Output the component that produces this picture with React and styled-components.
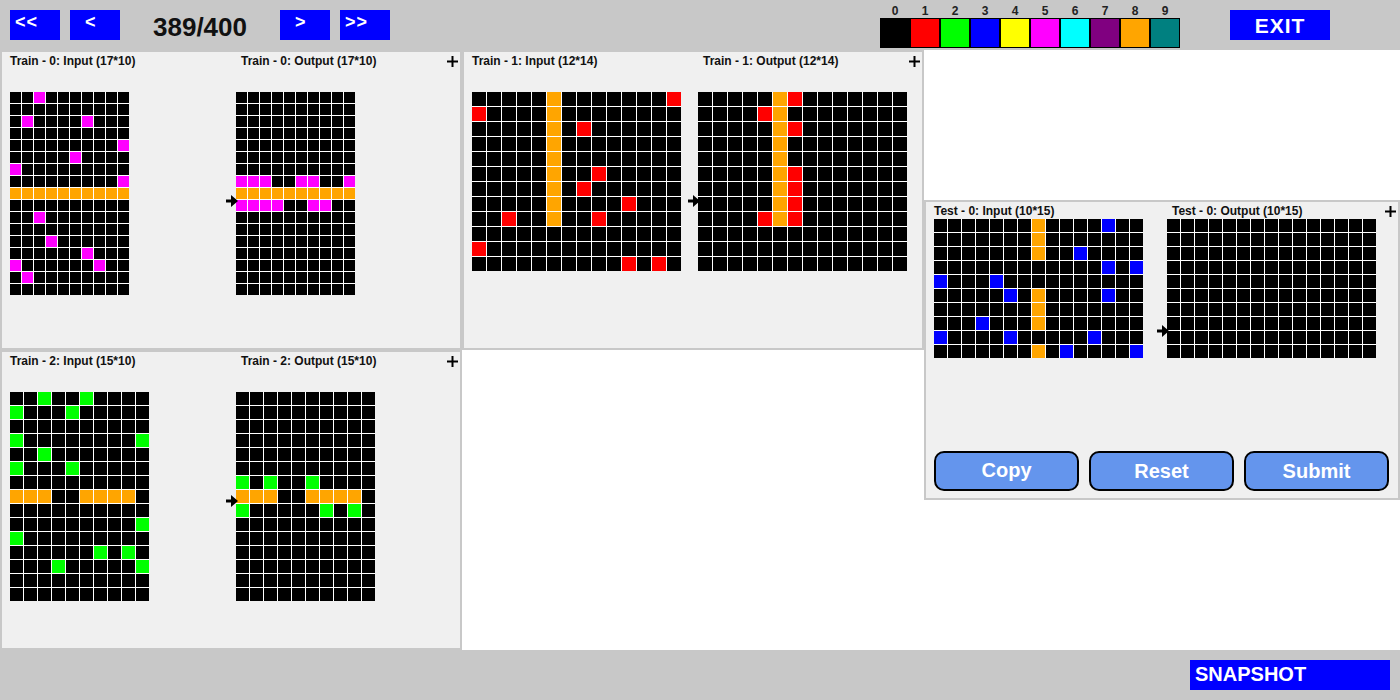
import React from 'react';
import styled, { createGlobalStyle } from 'styled-components';

const PALETTE = ['#000000', '#ff0000', '#00ff00', '#0000ff', '#ffff00', '#ff00ff', '#00ffff', '#800080', '#ffa500', '#008080'];

// builds a rows*cols board from { row: [[col, colour], ...] }
const makeBoard = (rows, cols, marks) => {
	const board = Array.from({ length: rows }, () => Array(cols).fill(0));
	Object.keys(marks).forEach(r => {
		marks[r].forEach(([c, v]) => {
			board[r][c] = v;
		});
	});
	return board;
};

const paint = (cols, v) => cols.map(c => [c, v]);
const ALL_TEN = [0, 1, 2, 3, 4, 5, 6, 7, 8, 9];

const PANELS = [
	{
		id: 'Train - 0',
		size: '17*10',
		pitch: 12,
		input: makeBoard(17, 10, {
			0: paint([2], 5),
			2: paint([1, 6], 5),
			4: paint([9], 5),
			5: paint([5], 5),
			6: paint([0], 5),
			7: paint([9], 5),
			8: paint(ALL_TEN, 8),
			10: paint([2], 5),
			12: paint([3], 5),
			13: paint([6], 5),
			14: paint([0, 7], 5),
			15: paint([1], 5)
		}),
		output: makeBoard(17, 10, {
			7: paint([0, 1, 2, 5, 6, 9], 5),
			8: paint(ALL_TEN, 8),
			9: paint([0, 1, 2, 3, 6, 7], 5)
		})
	},
	{
		id: 'Train - 1',
		size: '12*14',
		pitch: 15,
		input: makeBoard(12, 14, {
			0: [[5, 8], [13, 1]],
			1: [[0, 1], [5, 8]],
			2: [[5, 8], [7, 1]],
			3: [[5, 8]],
			4: [[5, 8]],
			5: [[5, 8], [8, 1]],
			6: [[5, 8], [7, 1]],
			7: [[5, 8], [10, 1]],
			8: [[2, 1], [5, 8], [8, 1]],
			10: [[0, 1]],
			11: [[10, 1], [12, 1]]
		}),
		output: makeBoard(12, 14, {
			0: [[5, 8], [6, 1]],
			1: [[4, 1], [5, 8]],
			2: [[5, 8], [6, 1]],
			3: [[5, 8]],
			4: [[5, 8]],
			5: [[5, 8], [6, 1]],
			6: [[5, 8], [6, 1]],
			7: [[5, 8], [6, 1]],
			8: [[4, 1], [5, 8], [6, 1]]
		})
	},
	{
		id: 'Train - 2',
		size: '15*10',
		pitch: 14,
		input: makeBoard(15, 10, {
			0: paint([2, 5], 2),
			1: paint([0, 4], 2),
			3: paint([0, 9], 2),
			4: paint([2], 2),
			5: paint([0, 4], 2),
			7: paint([0, 1, 2, 5, 6, 7, 8], 8),
			9: paint([9], 2),
			10: paint([0], 2),
			11: paint([6, 8], 2),
			12: paint([3, 9], 2)
		}),
		output: makeBoard(15, 10, {
			6: paint([0, 2, 5], 2),
			7: paint([0, 1, 2, 5, 6, 7, 8], 8),
			8: paint([0, 6, 8], 2)
		})
	}
];

const TEST_INPUT = makeBoard(10, 15, {
	0: [[7, 8], [12, 3]],
	1: [[7, 8]],
	2: [[7, 8], [10, 3]],
	3: [[12, 3], [14, 3]],
	4: [[0, 3], [4, 3]],
	5: [[5, 3], [7, 8], [12, 3]],
	6: [[7, 8]],
	7: [[3, 3], [7, 8]],
	8: [[0, 3], [5, 3], [11, 3]],
	9: [[7, 8], [9, 3], [14, 3]]
});
const TEST_OUTPUT = makeBoard(10, 15, {});

const GlobalStyle = createGlobalStyle`
	html, body {
		margin: 0;
		padding: 0;
		background: #fff;
		font-family: 'Liberation Sans', Arial, sans-serif;
	}
`;

const Page = styled.div`
	width: 1400px;
	height: 700px;
	display: flex;
	flex-direction: column;
	overflow: hidden;
`;

const TopBar = styled.header`
	height: 50px;
	flex: none;
	display: flex;
	align-items: flex-start;
	padding: 10px 70px 0 10px;
	box-sizing: border-box;
	background: #c8c8c8;
`;

// the arrows don't sit centred in the reference, inset is the text's left offset
const NavButton = styled.button`
	width: 50px;
	height: 30px;
	margin-left: ${props => props.gap || 0}px;
	padding: 0 0 6px ${props => props.inset}px;
	border: 0;
	text-align: left;
	background: #0000ff;
	color: #fff;
	font-family: inherit;
	font-weight: bold;
	font-size: 18px;
	letter-spacing: 1px;
`;

const Counter = styled.div`
	width: 160px;
	flex: none;
	text-align: center;
	font-size: 26px;
	font-weight: bold;
	line-height: 34px;
	color: #111;
`;

const Palette = styled.div`
	display: flex;
	margin: -9px 0 0 490px;
`;

const Swatch = styled.div`
	width: 30px;
	display: flex;
	flex-direction: column;
	align-items: center;
`;

const SwatchLabel = styled.span`
	height: 17px;
	font-size: 12px;
	line-height: 20px;
	font-weight: bold;
	color: #222;
`;

const SwatchColour = styled.div`
	width: 30px;
	height: 30px;
	box-sizing: border-box;
	border: 1px solid #000;
	background: ${props => props.colour};
`;

const ExitButton = styled.button`
	width: 100px;
	height: 30px;
	margin-left: 50px;
	padding: 1px 0 0;
	border: 0;
	background: #0000ff;
	color: #fff;
	font-family: inherit;
	font-weight: bold;
	font-size: 21px;
	letter-spacing: 1px;
`;

const Main = styled.main`
	flex: 1;
	display: flex;
	background: #fff;
`;

const TrainArea = styled.div`
	width: 924px;
	flex: none;
	display: grid;
	grid-template-columns: 462px 462px;
	grid-auto-rows: 300px;
`;

const TestArea = styled.div`
	flex: 1;
	display: flex;
	align-items: center;
`;

const Panel = styled.section`
	position: relative;
	box-sizing: border-box;
	width: 100%;
	height: 300px;
	display: flex;
	flex-direction: column;
	padding: 0 2px 0 8px;
	border: 2px solid #c8c8c8;
	background: #f0f0f0;
`;

const PanelHead = styled.div`
	height: ${props => props.height}px;
	flex: none;
	display: grid;
	grid-template-columns: ${props => props.split}px 1fr 11px;
	align-items: start;
`;

const Caption = styled.span`
	padding-left: ${props => props.indent || 0}px;
	font-size: 12px;
	font-weight: bold;
	line-height: 18px;
	color: #111;
	white-space: nowrap;
`;

const PlusIcon = styled.svg`
	display: block;
	width: 11px;
	height: 11px;
	margin-top: 4px;
`;

const Boards = styled.div`
	display: grid;
	grid-template-columns: ${props => props.split}px 1fr;
	align-items: start;
`;

const Board = styled.div`
	display: grid;
	width: max-content;
	grid-template-columns: repeat(${props => props.cols}, ${props => props.pitch - 1}px);
	grid-auto-rows: ${props => props.pitch - 1}px;
	gap: 1px;
	background: #fff;
`;

const Cell = styled.div`
	background: ${props => PALETTE[props.value]};
`;

const Arrow = styled.svg`
	position: absolute;
	left: ${props => props.left}px;
	top: ${props => props.top}px;
	width: 12px;
	height: 12px;
`;

const ActionRow = styled.div`
	display: flex;
	gap: 10px;
	margin-top: auto;
	margin-bottom: 7px;
`;

const ActionButton = styled.button`
	width: 145px;
	height: 40px;
	padding: 0 0 ${props => (props.raised ? 2 : 0)}px;
	box-sizing: border-box;
	border: 2px solid #000;
	border-radius: 10px;
	background: #6495ed;
	color: #fff;
	font-family: inherit;
	font-size: 20px;
	font-weight: bold;
`;

const BottomBar = styled.footer`
	height: 50px;
	flex: none;
	display: flex;
	justify-content: flex-end;
	align-items: flex-start;
	padding: 10px 10px 0 0;
	box-sizing: border-box;
	background: #c8c8c8;
`;

const SnapshotButton = styled.button`
	width: 200px;
	height: 30px;
	padding: 0 0 2px 5px;
	border: 0;
	text-align: left;
	background: #0000ff;
	color: #fff;
	font-family: inherit;
	font-size: 20px;
	font-weight: bold;
`;

const GridBoard = ({ data, pitch }) => (
	<Board cols={data[0].length} pitch={pitch}>
		{data.flat().map((value, i) => (
			<Cell key={i} value={value} />
		))}
	</Board>
);

const Plus = () => (
	<PlusIcon viewBox='0 0 11 11'>
		<path d='M4.5 0h2v4.5H11v2H6.5V11h-2V6.5H0v-2h4.5z' fill='#000' />
	</PlusIcon>
);

const ArrowMark = ({ left, top }) => (
	<Arrow left={left} top={top} viewBox='0 0 12 12'>
		<path d='M0 4.5h5V0l7 6-7 6V7.5H0z' fill='#000' />
	</Arrow>
);

const ExamplePanel = ({ id, size, pitch, input, output }) => (
	<Panel>
		<PanelHead height={40} split={226}>
			<Caption>{id}: Input ({size})</Caption>
			<Caption indent={5}>{id}: Output ({size})</Caption>
			<Plus />
		</PanelHead>
		<Boards split={226}>
			<GridBoard data={input} pitch={pitch} />
			<GridBoard data={output} pitch={pitch} />
		</Boards>
		<ArrowMark left={224} top={143} />
	</Panel>
);

const App = () => (
	<Page>
		<GlobalStyle />
		<TopBar>
			<NavButton inset={5}>&lt;&lt;</NavButton>
			<NavButton gap={10} inset={15}>&lt;</NavButton>
			<Counter>389/400</Counter>
			<NavButton inset={15}>&gt;</NavButton>
			<NavButton gap={10} inset={5}>&gt;&gt;</NavButton>
			<Palette>
				{PALETTE.map((colour, i) => (
					<Swatch key={colour}>
						<SwatchLabel>{i}</SwatchLabel>
						<SwatchColour colour={colour} />
					</Swatch>
				))}
			</Palette>
			<ExitButton>EXIT</ExitButton>
		</TopBar>
		<Main>
			<TrainArea>
				{PANELS.map(panel => (
					<ExamplePanel key={panel.id} {...panel} />
				))}
			</TrainArea>
			<TestArea>
				<Panel>
					<PanelHead height={17} split={233}>
						<Caption>Test - 0: Input (10*15)</Caption>
						<Caption indent={5}>Test - 0: Output (10*15)</Caption>
						<Plus />
					</PanelHead>
					<Boards split={233}>
						<GridBoard data={TEST_INPUT} pitch={14} />
						<GridBoard data={TEST_OUTPUT} pitch={14} />
					</Boards>
					<ArrowMark left={231} top={123} />
					<ActionRow>
						<ActionButton raised>Copy</ActionButton>
						<ActionButton>Reset</ActionButton>
						<ActionButton>Submit</ActionButton>
					</ActionRow>
				</Panel>
			</TestArea>
		</Main>
		<BottomBar>
			<SnapshotButton>SNAPSHOT</SnapshotButton>
		</BottomBar>
	</Page>
);

export default App;
